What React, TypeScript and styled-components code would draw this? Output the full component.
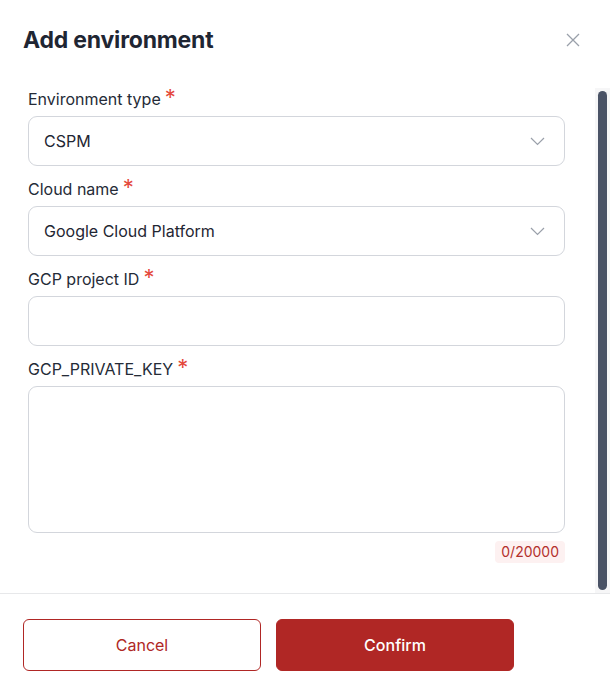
import React from "react";
import styled, { createGlobalStyle } from "styled-components";

const GlobalStyle = createGlobalStyle`
  * { box-sizing: border-box; }
  html, body { margin: 0; padding: 0; background: #ffffff; }
  body {
    font-family: Inter, Roboto, "Liberation Sans", Arial, sans-serif;
    color: #1f2937;
  }
`;

const Dialog = styled.div`
  width: 610px;
  height: 694px;
  display: flex;
  flex-direction: column;
  background: #ffffff;
`;

const Header = styled.div`
  height: 88px;
  display: flex;
  align-items: flex-start;
  justify-content: space-between;
  padding: 25px 30px 0 23px;
`;

const Title = styled.h2`
  margin: 0;
  font-size: 23px;
  line-height: 30px;
  font-weight: 700;
  letter-spacing: -0.2px;
  color: #1f2633;
`;

const CloseButton = styled.button`
  border: none;
  background: transparent;
  padding: 0;
  margin-top: 8px;
  width: 14px;
  height: 14px;
  display: flex;
  cursor: pointer;
`;

const Body = styled.div`
  height: 505px;
  display: flex;
`;

const Content = styled.div`
  flex: 1;
  overflow: hidden;
  padding: 0 30px 0 28px;
  display: flex;
  flex-direction: column;
`;

const ScrollTrack = styled.div`
  width: 15px;
  background: #f6f6f7;
  padding: 3px;
  display: flex;
`;

const ScrollThumb = styled.div`
  flex: 1;
  background: #4a5366;
  border-radius: 5px;
`;

const Field = styled.div`
  display: flex;
  flex-direction: column;
  margin-bottom: 12px;
`;

const Label = styled.label`
  display: flex;
  align-items: baseline;
  height: 22px;
  font-size: 16px;
  line-height: 22px;
  margin-bottom: 6px;
  color: #252b37;
`;

const Star = styled.span`
  color: #e4483b;
  font-size: 22px;
  line-height: 27px;
  margin: -5px 0 -5px 4px;
`;

const Box = styled.div<{ $tall?: boolean }>`
  height: ${(p) => (p.$tall ? "147px" : "50px")};
  border: 1px solid #d3d6dc;
  border-radius: 9px;
  display: flex;
  align-items: center;
  justify-content: space-between;
  padding: 0 19px 0 15px;
  font-size: 16px;
  color: #1f2633;
`;

const TextInput = styled.input`
  border: none;
  outline: none;
  background: transparent;
  width: 100%;
  font: inherit;
`;

const TextArea = styled.textarea`
  border: none;
  outline: none;
  resize: none;
  width: 100%;
  height: 100%;
  padding: 12px 0;
  background: transparent;
  font: inherit;
`;

const CounterRow = styled.div`
  display: flex;
  justify-content: flex-end;
  margin-top: -4px;
`;

const Counter = styled.span`
  background: #fdf1f1;
  color: #b3302c;
  font-size: 14px;
  line-height: 22px;
  padding: 0 6px;
  border-radius: 4px;
`;

const Footer = styled.div`
  border-top: 1px solid #e7e8ea;
  display: flex;
  gap: 15px;
  padding: 25px 0 0 23px;
`;

const Button = styled.button<{ $primary?: boolean }>`
  width: 238px;
  height: 52px;
  border-radius: 6px;
  font-family: Inter, Roboto, "Liberation Sans", Arial, sans-serif;
  font-size: 16px;
  font-weight: ${(p) => (p.$primary ? 500 : 400)};
  cursor: pointer;
  border: 1px solid #b02725;
  background: ${(p) => (p.$primary ? "#b02725" : "#ffffff")};
  color: ${(p) => (p.$primary ? "#ffffff" : "#b02725")};
`;

const Chevron = () => (
  <svg width="15" height="9" viewBox="0 0 15 9" fill="none">
    <path d="M1 1l6.5 6.5L14 1" stroke="#9aa0aa" strokeWidth="1.2" />
  </svg>
);

const CloseIcon = () => (
  <svg width="14" height="14" viewBox="0 0 14 14" fill="none">
    <path d="M1 1l12 12M13 1L1 13" stroke="#9aa0aa" strokeWidth="1.3" />
  </svg>
);

function FieldLabel({ children }: { children: React.ReactNode }) {
  return (
    <Label>
      {children}
      <Star>*</Star>
    </Label>
  );
}

export default function App() {
  return (
    <>
      <GlobalStyle />
      <Dialog>
        <Header>
          <Title>Add environment</Title>
          <CloseButton aria-label="Close">
            <CloseIcon />
          </CloseButton>
        </Header>
        <Body>
          <Content>
            <Field>
              <FieldLabel>Environment type</FieldLabel>
              <Box>
                <span>CSPM</span>
                <Chevron />
              </Box>
            </Field>
            <Field>
              <FieldLabel>Cloud name</FieldLabel>
              <Box>
                <span>Google Cloud Platform</span>
                <Chevron />
              </Box>
            </Field>
            <Field>
              <FieldLabel>GCP project ID</FieldLabel>
              <Box>
                <TextInput />
              </Box>
            </Field>
            <Field>
              <FieldLabel>GCP_PRIVATE_KEY</FieldLabel>
              <Box $tall>
                <TextArea />
              </Box>
            </Field>
            <CounterRow>
              <Counter>0/20000</Counter>
            </CounterRow>
          </Content>
          <ScrollTrack>
            <ScrollThumb />
          </ScrollTrack>
        </Body>
        <Footer>
          <Button>Cancel</Button>
          <Button $primary>Confirm</Button>
        </Footer>
      </Dialog>
    </>
  );
}
